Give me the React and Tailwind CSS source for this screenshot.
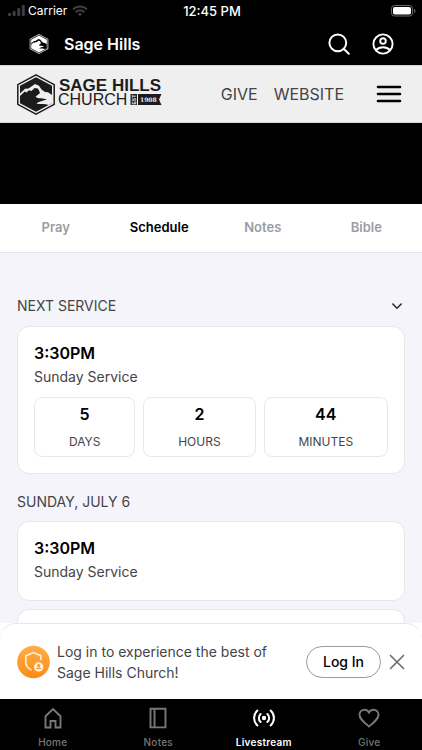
import React, { useState } from 'react';

const TABS = ['Pray', 'Schedule', 'Notes', 'Bible'];

const COUNTDOWN = [
    { value: 5, label: 'DAYS' },
    { value: 2, label: 'HOURS' },
    { value: 44, label: 'MINUTES' },
];

const StatusBar = () => (
    <div className="grid grid-cols-3 items-center h-[22px] pl-2 pr-1.5 text-xs text-white">
        <div className="flex items-center gap-[3px]">
            <svg width="17" height="12" viewBox="0 0 17 12" fill="#3d3d3d" aria-hidden="true">
                <rect x="0" y="8" width="3" height="3" rx="1" />
                <rect x="4.600" y="6" width="3" height="5" rx="1" />
                <rect x="9.200" y="3" width="3" height="8" rx="1" />
                <rect x="13.800" y="0" width="3" height="11" rx="1" />
            </svg>
            <span>Carrier</span>
            <svg className="ml-0.5" width="16" height="12" viewBox="0 0 16 12" fill="none" stroke="#3d3d3d" strokeWidth="2" aria-hidden="true">
                <path d="M1 4.400a10 10 0 0 1 14 0" />
                <path d="M3.600 7.200a6.200 6.200 0 0 1 8.800 0" />
                <path d="M5.800 9 8 11.300 10.200 9a3.200 3.200 0 0 0-4.400 0z" fill="#3d3d3d" stroke="none" />
            </svg>
        </div>
        <span className="text-center text-[13px] leading-4 font-medium">12:45 PM</span>
        <svg className="justify-self-end" width="25" height="12" viewBox="0 0 25 12" aria-hidden="true">
            <rect x="0.5" y="0.5" width="21" height="10.5" rx="3" fill="none" stroke="#6b6b6b" />
            <rect x="2" y="2" width="18" height="7.5" rx="1.8" fill="#fff" />
            <path d="M23 4v4c.9-.3 1.400-1.100 1.400-2S23.900 4.300 23 4z" fill="#6b6b6b" />
        </svg>
    </div>
);

// Hexagon badge: outer ring, filled core, ridge and open slope cut out
const Badge = ({ color, cut }) => (
    <>
        <path d="M19 .9 37.200 10.600V30.400L19 40.100.8 30.400V10.600z" fill={cut} stroke={color} strokeWidth="1.500" />
        <path d="M19 3.200 35 11.800V29.200L19 37.800 3 29.200V11.800z" fill={color} />
        <path
            d="M3 19.500 8 14.800 11.500 14.500 18 10 22 11.800 24.500 15.500 28 18 31 18.300 35 21V29.200L31.500 31C28.500 29.800 24 30.600 19.500 29.800 21 27.200 27 27 30 25.200 26.500 24.200 21 24.800 18.600 23 19.600 21 22.500 20.300 23 18.800L21 14.600 17.500 14 14.500 17 12 16.200 9.500 18.400 7.800 17.400 3 22z"
            fill={cut}
        />
    </>
);

const ChurchLogo = () => (
    <svg
        width="146"
        height="41"
        viewBox="0 0 146 41"
        role="img"
        aria-label="Sage Hills Church"
        className="font-['Liberation_Sans',sans-serif]"
    >
        <Badge color="#1c1c1e" cut="#efefef" />
        <text x="42" y="17" fontSize="17" fontWeight="700" fill="#1c1c1e">SAGE HILLS</text>
        <text x="41" y="31" fontSize="16" fill="#1c1c1e">CHURCH</text>
        <path d="M113.500 20h6.500v11h-6.500z" fill="#1c1c1e" />
        <text x="-30.500" y="118.500" transform="rotate(-90)" fontSize="5" fontWeight="700" fill="#efefef">EST</text>
        <path d="M121 20h23.500l-2.500 5.500 2.500 5.500h-23.500z" fill="#1c1c1e" />
        <text x="123" y="27.800" fontSize="6" fontWeight="700" fill="#efefef" className="font-['DejaVu_Serif',serif]">1908</text>
    </svg>
);

const AppHeader = () => (
    <header className="flex items-center h-[43px] px-7 text-white">
        <svg width="22" height="20" viewBox="0 0 38 41" aria-hidden="true">
            <Badge color="#fff" cut="#000" />
        </svg>
        <h1 className="ml-3.5 text-base font-semibold">Sage Hills</h1>
        <div className="ml-auto flex items-center gap-[22px]">
            <button type="button" aria-label="Search">
                <svg width="22" height="22" viewBox="0 0 22 22" fill="none" stroke="currentColor" strokeWidth="2" strokeLinecap="round">
                    <circle cx="9.800" cy="9.800" r="8.400" />
                    <path d="m16.200 16.200 4.600 4.600" />
                </svg>
            </button>
            <button type="button" aria-label="Account">
                <svg width="22" height="22" viewBox="0 0 22 22" fill="none" stroke="currentColor" strokeWidth="1.900">
                    <circle cx="11" cy="11" r="9.600" />
                    <circle cx="11" cy="8" r="2.800" />
                    <path d="M3.900 17.200c1.900-1.900 4.300-2.900 7.100-2.900s5.200 1 7.100 2.900" />
                </svg>
            </button>
        </div>
    </header>
);

const SiteNav = () => (
    <nav className="flex items-center h-[58px] pl-[17px] pr-5 bg-[#efefef] border-y border-[#d8d8d8]">
        <ChurchLogo />
        <div className="ml-auto flex items-center gap-4 text-base text-[#444]">
            <a href="#give">GIVE</a>
            <a href="#website">WEBSITE</a>
        </div>
        <button type="button" aria-label="Menu" className="ml-8">
            <svg width="26" height="18" viewBox="0 0 26 18" stroke="#000" strokeWidth="2.600" strokeLinecap="round">
                <path d="M2 2h22M2 9h22M2 16h22" />
            </svg>
        </button>
    </nav>
);

const Card = ({ children }) => (
    <article className="min-h-20 px-4 pt-3.5 pb-4 bg-white border border-[#e6e6ec] rounded-xl">
        {children}
    </article>
);

const ServiceInfo = ({ time, name }) => (
    <>
        <h3 className="text-base leading-6 font-semibold text-black">{time}</h3>
        <p className="text-sm leading-6 text-[#444448]">{name}</p>
    </>
);

const Countdown = () => (
    <div className="flex gap-2 mt-2">
        {COUNTDOWN.map((item) => (
            <div key={item.label} className="flex-auto pt-1.5 pb-1 text-center border border-[#e8e8ec] rounded-lg">
                <div className="text-base leading-5 font-semibold text-black">{item.value}</div>
                <div className="mt-2 text-xs leading-5 text-[#444448]">{item.label}</div>
            </div>
        ))}
    </div>
);

const LoginBanner = ({ onClose }) => (
    <div className="bg-white">
        <div className="flex items-center px-[17px] h-[76px] bg-white border-t border-[#e6e6ec] rounded-t-2xl">
            <svg className="shrink-0" width="34" height="34" viewBox="0 0 34 34" aria-hidden="true">
                <defs>
                    <linearGradient id="shield" x1="0" y1="0" x2="0" y2="1">
                        <stop offset="0" stopColor="#ffae4a" />
                        <stop offset="1" stopColor="#fb8c14" />
                    </linearGradient>
                </defs>
                <circle cx="16.500" cy="17" r="16.300" fill="url(#shield)" />
                <path d="M14.500 25.200c-3.500-1.700-5.700-4.500-5.700-8.500v-6L16.500 7.500l7.400 3.200v4.600" fill="none" stroke="#fff1dd" strokeWidth="1.500" />
                <circle cx="21.700" cy="22" r="4.700" fill="#fff1dd" />
                <circle cx="21.700" cy="20.500" r="1.500" fill="#fb9426" />
                <path d="M19 24.100c.3-1.200 1.300-1.600 2.700-1.600s2.400.4 2.700 1.600z" fill="#fb9426" />
            </svg>
            <p className="flex-1 ml-1.5 text-sm leading-[21px] text-[#444448]">
                Log in to experience the best of Sage Hills Church!
            </p>
            <button type="button" className="ml-2 h-8 px-4 text-sm font-medium text-black border border-[#9a9aa0] rounded-full">
                Log In
            </button>
            <button type="button" aria-label="Close" onClick={onClose} className="ml-2">
                <svg width="16" height="16" viewBox="0 0 16 16" stroke="#6f6f73" strokeWidth="1.700" strokeLinecap="round">
                    <path d="m1.500 1.500 13 13M14.500 1.500l-13 13" />
                </svg>
            </button>
        </div>
    </div>
);

const NAV_ITEMS = [
    {
        label: 'Home',
        icon: <path d="M3.500 9.200 11 2l7.500 7.200V20.500h-5V14h-5v6.500h-5z" />,
    },
    {
        label: 'Notes',
        icon: <path d="M3.500 1.800h15v18.600h-15zM7.500 1.800v18.600" />,
    },
    {
        label: 'Livestream',
        icon: (
            <>
                <circle cx="11" cy="11" r="2.200" fill="currentColor" stroke="none" />
                <path d="M7.600 7a5.400 5.400 0 0 0 0 8M14.400 7a5.400 5.400 0 0 1 0 8M4.400 3.600a9.900 9.900 0 0 0 0 14.800M17.600 3.600a9.900 9.900 0 0 1 0 14.800" strokeLinecap="round" strokeWidth="2" />
            </>
        ),
    },
    {
        label: 'Give',
        icon: <path d="M11 19.500C5 14.300 1.500 11.500 1.500 7.700A4.900 4.900 0 0 1 6.400 2.700c2 0 3.600 1 4.600 2.800 1-1.800 2.600-2.800 4.600-2.800a4.900 4.900 0 0 1 4.900 5c0 3.800-3.500 6.600-9.500 11.800z" />,
    },
];

const BottomNav = ({ current }) => (
    <nav className="grid grid-cols-4 h-[51px] pt-2 bg-black">
        {NAV_ITEMS.map((item) => (
            <a
                key={item.label}
                href={`#${item.label.toLowerCase()}`}
                className={`flex flex-col items-center gap-[5px] text-[10px] leading-4 tracking-wide ${
                    item.label === current ? 'font-semibold text-white' : 'font-medium text-[#787878]'
                }`}
            >
                <svg className="shrink-0" width="22" height="22" viewBox="0 0 22 22" fill="none" stroke="currentColor" strokeWidth="1.900" aria-hidden="true">
                    {item.icon}
                </svg>
                {item.label}
            </a>
        ))}
    </nav>
);

const App = () => {
    const [tab, setTab] = useState('Schedule');
    const [open, setOpen] = useState(true);
    const [showLogin, setShowLogin] = useState(true);

    return (
        <div className="flex flex-col h-screen bg-black font-[Inter,sans-serif]">
            <StatusBar />
            <AppHeader />
            <SiteNav />

            {/* Video player */}
            <div className="shrink-0 h-[81px] bg-black" />

            <div className="shrink-0 grid grid-cols-4 h-[49px] px-1 bg-white border-b border-[#e4e4ea]">
                {TABS.map((name) => (
                    <button
                        key={name}
                        type="button"
                        onClick={() => setTab(name)}
                        className={`text-[13px] font-semibold ${name === tab ? 'text-black' : 'text-[#9c9ca3]'}`}
                    >
                        {name}
                    </button>
                ))}
            </div>

            <main className="flex-1 min-h-0 overflow-hidden px-[17px] pt-[41px] bg-[#f4f4fa]">
                <button
                    type="button"
                    onClick={() => setOpen(!open)}
                    className="flex items-center justify-between w-full pr-0.5 text-sm leading-6 text-[#444448]"
                >
                    <span>NEXT SERVICE</span>
                    <svg width="12" height="12" viewBox="0 0 12 12" fill="none" stroke="#2c2c2e" strokeWidth="1.600" strokeLinecap="round" strokeLinejoin="round">
                        <path d="m1.800 4 4.200 4.200L10.200 4" />
                    </svg>
                </button>
                {open && (
                    <div className="mt-2">
                        <Card>
                            <ServiceInfo time="3:30PM" name="Sunday Service" />
                            <Countdown />
                        </Card>
                    </div>
                )}

                <h2 className="mt-4 text-sm leading-6 text-[#444448]">SUNDAY, JULY 6</h2>
                <div className="flex flex-col gap-2 mt-[7px]">
                    <Card>
                        <ServiceInfo time="3:30PM" name="Sunday Service" />
                    </Card>
                    <Card />
                </div>
            </main>

            {showLogin && <LoginBanner onClose={() => setShowLogin(false)} />}
            <BottomNav current="Livestream" />
        </div>
    );
};

export default App;
